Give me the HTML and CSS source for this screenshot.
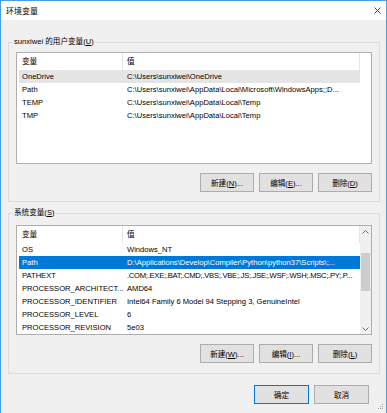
FILE: index.html
```html
<!DOCTYPE html>
<html lang="zh-CN">
<head>
    <meta charset="UTF-8">
    <title>环境变量</title>
    <link rel="stylesheet" href="styles.css">
</head>
<body>
    <div class="window">
        <!-- Titelleiste -->
        <div class="titlebar">
            <span class="title">环境变量</span>
            <svg class="close" width="7" height="7" viewBox="0 0 7 7">
                <path d="M0.5 0.5 L6.5 6.5 M6.5 0.5 L0.5 6.5" stroke="#333" stroke-width="0.9" fill="none"/>
            </svg>
        </div>

        <div class="content">
            <!-- Benutzervariablen -->
            <div class="group user-group">
                <div class="group-title">sunxiwei 的用户变量(<u>U</u>)</div>
                <div class="list">
                    <div class="list-body">
                        <div class="row head"><span class="name">变量</span><span class="value">值</span></div>
                        <div class="row inactive"><span class="name">OneDrive</span><span class="value">C:\Users\sunxiwei\OneDrive</span></div>
                        <div class="row"><span class="name">Path</span><span class="value">C:\Users\sunxiwei\AppData\Local\Microsoft\WindowsApps;;D...</span></div>
                        <div class="row"><span class="name">TEMP</span><span class="value">C:\Users\sunxiwei\AppData\Local\Temp</span></div>
                        <div class="row"><span class="name">TMP</span><span class="value">C:\Users\sunxiwei\AppData\Local\Temp</span></div>
                    </div>
                </div>
                <div class="actions">
                    <button>新建(<u>N</u>)...</button>
                    <button>编辑(<u>E</u>)...</button>
                    <button>删除(<u>D</u>)</button>
                </div>
            </div>

            <!-- Systemvariablen -->
            <div class="group sys-group">
                <div class="group-title">系统变量(<u>S</u>)</div>
                <div class="list">
                    <div class="list-body">
                        <div class="row head"><span class="name">变量</span><span class="value">值</span></div>
                        <div class="row"><span class="name">OS</span><span class="value">Windows_NT</span></div>
                        <div class="row selected"><span class="name">Path</span><span class="value">D:\Applications\Develop\Compiler\Python\python37\Scripts\;...</span></div>
                        <div class="row"><span class="name">PATHEXT</span><span class="value tight">.COM;.EXE;.BAT;.CMD;.VBS;.VBE;.JS;.JSE;.WSF;.WSH;.MSC;.PY;.P...</span></div>
                        <div class="row"><span class="name">PROCESSOR_ARCHITECT...</span><span class="value">AMD64</span></div>
                        <div class="row"><span class="name">PROCESSOR_IDENTIFIER</span><span class="value">Intel64 Family 6 Model 94 Stepping 3, GenuineIntel</span></div>
                        <div class="row"><span class="name">PROCESSOR_LEVEL</span><span class="value">6</span></div>
                        <div class="row"><span class="name">PROCESSOR_REVISION</span><span class="value">5e03</span></div>
                    </div>
                    <div class="scrollbar">
                        <div class="arrow">
                            <svg width="7" height="4" viewBox="0 0 7 4"><path d="M0.5 3.5 L3.5 0.5 L6.5 3.5" stroke="#606060" stroke-width="0.9" fill="none"/></svg>
                        </div>
                        <div class="thumb"></div>
                        <div class="arrow down">
                            <svg width="7" height="4" viewBox="0 0 7 4"><path d="M0.5 0.5 L3.5 3.5 L6.5 0.5" stroke="#606060" stroke-width="0.9" fill="none"/></svg>
                        </div>
                    </div>
                </div>
                <div class="actions">
                    <button>新建(<u>W</u>)...</button>
                    <button>编辑(<u>I</u>)...</button>
                    <button>删除(<u>L</u>)</button>
                </div>
            </div>

            <div class="footer">
                <button class="primary">确定</button>
                <button>取消</button>
            </div>
        </div>

        <svg class="grip" width="7" height="7" viewBox="0 0 7 7">
            <rect x="5" y="0" width="1" height="1" fill="#a0a0a0"/>
            <rect x="3" y="2" width="1" height="1" fill="#a0a0a0"/>
            <rect x="5" y="2" width="1" height="1" fill="#a0a0a0"/>
            <rect x="1" y="4" width="1" height="1" fill="#a0a0a0"/>
            <rect x="3" y="4" width="1" height="1" fill="#a0a0a0"/>
            <rect x="5" y="4" width="1" height="1" fill="#a0a0a0"/>
        </svg>
    </div>
</body>
</html>
```

FILE: styles.css
```css
* {
    box-sizing: border-box;
}
body {
    margin: 0;
    font-family: "Liberation Sans", "Noto Sans CJK SC", sans-serif;
    font-size: 7.6px;
    color: #000;
    background-color: #f0f0f0;
}
.window {
    position: relative;
    width: 387px;
    height: 413px;
    border: 1px solid #4a9fe3;
    border-bottom: none;
    background-color: #f0f0f0;
    overflow: hidden;
}
.titlebar {
    height: 19px;
    background-color: #fff;
    display: flex;
    align-items: center;
    justify-content: space-between;
    padding: 0 5px 0 5px;
}
.title {
    font-size: 8px;
}
.content {
    padding: 0 6px 0 7px;
}
.group {
    border: 1px solid #dcdcdc;
    padding: 0 7px 9px 7px;
    display: flex;
    flex-direction: column;
}
.group-title {
    align-self: flex-start;
    margin: -7px 0 0 -3px;
    padding: 0 1px;
    line-height: 12px;
    background-color: #f0f0f0;
}
.user-group {
    margin-top: 22px;
}
.user-group .list {
    margin-top: 4px;
    height: 112px;
}
.sys-group {
    margin-top: 11px;
    padding-bottom: 10px;
}
.sys-group .list {
    margin-top: 6px;
    height: 110px;
}
.list {
    border: 1px solid #abadb3;
    background-color: #fff;
    display: flex;
}
.list-body {
    width: 343px;
    padding-left: 2px;
}
.row {
    display: flex;
    height: 13px;
    line-height: 13px;
}
.row.head {
    height: 17px;
    line-height: 17px;
}
.row span {
    overflow: hidden;
    white-space: nowrap;
}
.name {
    width: 104px;
    padding-left: 3px;
}
.value {
    width: 237px;
    padding-left: 4px;
}
.value.tight {
    letter-spacing: -0.25px;
}
.head .name, .head .value {
    border-right: 1px solid #e5e5e5;
}
.row.inactive {
    background-color: #e5e5e5;
}
.row.selected {
    background-color: #0078d7;
    color: #fff;
}
.scrollbar {
    width: 11px;
    background-color: #f0f0f0;
    display: flex;
    flex-direction: column;
}
.arrow {
    height: 11px;
    display: flex;
    align-items: center;
    justify-content: center;
}
.arrow.down {
    margin-top: auto;
}
.thumb {
    margin: 16px 1px 0 1px;
    height: 38px;
    background-color: #cdcdcd;
}
.actions {
    display: flex;
    justify-content: flex-end;
    gap: 5px;
    margin-top: 9px;
}
button {
    width: 54px;
    height: 19px;
    padding: 0;
    border: 1px solid #adadad;
    background-color: #e1e1e1;
    font: inherit;
    color: #000;
}
.footer {
    display: flex;
    justify-content: flex-end;
    gap: 5px;
    margin-top: 11px;
    padding-right: 11px;
}
.footer button {
    width: 55px;
}
.footer button.primary {
    border-color: #0078d7;
}
.grip {
    position: absolute;
    right: 2px;
    bottom: 2px;
}
```
